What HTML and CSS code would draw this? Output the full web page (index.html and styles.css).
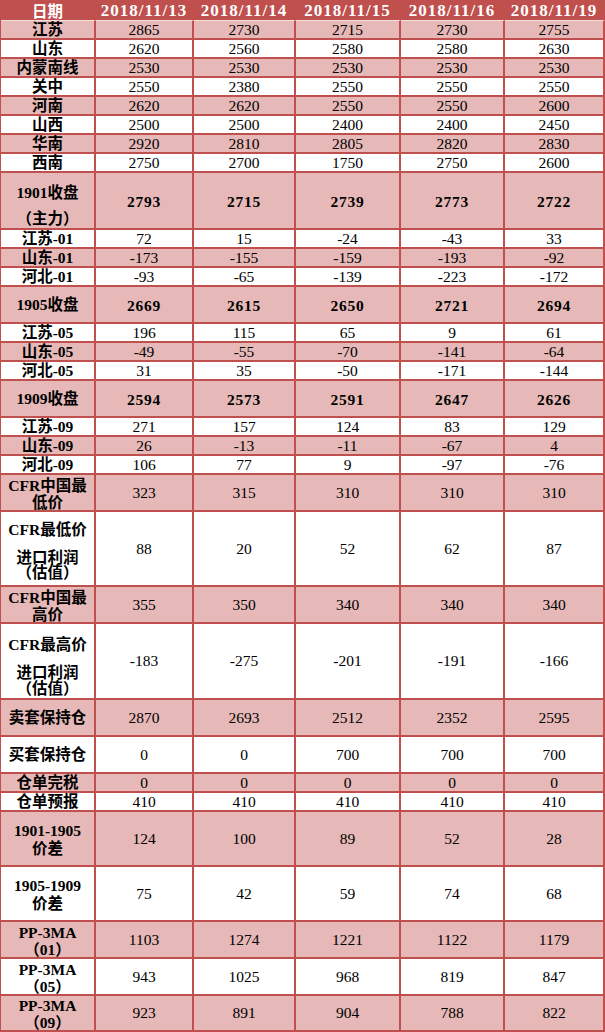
FILE: index.html
```html
<!DOCTYPE html>
<html lang="zh-CN">
<head>
<meta charset="utf-8">
<title>价格表</title>
<link rel="stylesheet" href="styles.css">
</head>
<body>
<div class="sheet">
  <div class="r hdr">
    <div class="c hl">日期</div>
    <div class="c hd">2018/11/13</div>
    <div class="c hd">2018/11/14</div>
    <div class="c hd">2018/11/15</div>
    <div class="c hd">2018/11/16</div>
    <div class="c hd">2018/11/19</div>
  </div>
  <div class="r p"><div class="c l">江苏</div><div class="c v">2865</div><div class="c v">2730</div><div class="c v">2715</div><div class="c v">2730</div><div class="c v">2755</div></div>
  <div class="r"><div class="c l">山东</div><div class="c v">2620</div><div class="c v">2560</div><div class="c v">2580</div><div class="c v">2580</div><div class="c v">2630</div></div>
  <div class="r p"><div class="c l">内蒙南线</div><div class="c v">2530</div><div class="c v">2530</div><div class="c v">2530</div><div class="c v">2530</div><div class="c v">2530</div></div>
  <div class="r"><div class="c l">关中</div><div class="c v">2550</div><div class="c v">2380</div><div class="c v">2550</div><div class="c v">2550</div><div class="c v">2550</div></div>
  <div class="r p"><div class="c l">河南</div><div class="c v">2620</div><div class="c v">2620</div><div class="c v">2550</div><div class="c v">2550</div><div class="c v">2600</div></div>
  <div class="r"><div class="c l">山西</div><div class="c v">2500</div><div class="c v">2500</div><div class="c v">2400</div><div class="c v">2400</div><div class="c v">2450</div></div>
  <div class="r p"><div class="c l">华南</div><div class="c v">2920</div><div class="c v">2810</div><div class="c v">2805</div><div class="c v">2820</div><div class="c v">2830</div></div>
  <div class="r"><div class="c l">西南</div><div class="c v">2750</div><div class="c v">2700</div><div class="c v">1750</div><div class="c v">2750</div><div class="c v">2600</div></div>
  <div class="r p h57"><div class="c l main"><span class="m1">1901收盘</span><span class="m2">（主力）</span></div><div class="c b">2793</div><div class="c b">2715</div><div class="c b">2739</div><div class="c b">2773</div><div class="c b">2722</div></div>
  <div class="r"><div class="c l">江苏-01</div><div class="c v">72</div><div class="c v">15</div><div class="c v">-24</div><div class="c v">-43</div><div class="c v">33</div></div>
  <div class="r p"><div class="c l">山东-01</div><div class="c v">-173</div><div class="c v">-155</div><div class="c v">-159</div><div class="c v">-193</div><div class="c v">-92</div></div>
  <div class="r"><div class="c l">河北-01</div><div class="c v">-93</div><div class="c v">-65</div><div class="c v">-139</div><div class="c v">-223</div><div class="c v">-172</div></div>
  <div class="r p h37"><div class="c l">1905收盘</div><div class="c b">2669</div><div class="c b">2615</div><div class="c b">2650</div><div class="c b">2721</div><div class="c b">2694</div></div>
  <div class="r"><div class="c l">江苏-05</div><div class="c v">196</div><div class="c v">115</div><div class="c v">65</div><div class="c v">9</div><div class="c v">61</div></div>
  <div class="r p"><div class="c l">山东-05</div><div class="c v">-49</div><div class="c v">-55</div><div class="c v">-70</div><div class="c v">-141</div><div class="c v">-64</div></div>
  <div class="r"><div class="c l">河北-05</div><div class="c v">31</div><div class="c v">35</div><div class="c v">-50</div><div class="c v">-171</div><div class="c v">-144</div></div>
  <div class="r p h37"><div class="c l">1909收盘</div><div class="c b">2594</div><div class="c b">2573</div><div class="c b">2591</div><div class="c b">2647</div><div class="c b">2626</div></div>
  <div class="r"><div class="c l">江苏-09</div><div class="c v">271</div><div class="c v">157</div><div class="c v">124</div><div class="c v">83</div><div class="c v">129</div></div>
  <div class="r p"><div class="c l">山东-09</div><div class="c v">26</div><div class="c v">-13</div><div class="c v">-11</div><div class="c v">-67</div><div class="c v">4</div></div>
  <div class="r"><div class="c l">河北-09</div><div class="c v">106</div><div class="c v">77</div><div class="c v">9</div><div class="c v">-97</div><div class="c v">-76</div></div>
  <div class="r p h37"><div class="c l two"><span>CFR中国最</span><span>低价</span></div><div class="c v">323</div><div class="c v">315</div><div class="c v">310</div><div class="c v">310</div><div class="c v">310</div></div>
  <div class="r h75"><div class="c l three a"><span class="t1">CFR最低价</span><span class="t2">进口利润</span><span class="t3">（估值）</span></div><div class="c v">88</div><div class="c v">20</div><div class="c v">52</div><div class="c v">62</div><div class="c v">87</div></div>
  <div class="r p h37"><div class="c l two"><span>CFR中国最</span><span>高价</span></div><div class="c v">355</div><div class="c v">350</div><div class="c v">340</div><div class="c v">340</div><div class="c v">340</div></div>
  <div class="r h76"><div class="c l three bb"><span class="t1">CFR最高价</span><span class="t2">进口利润</span><span class="t3">（估值）</span></div><div class="c v">-183</div><div class="c v">-275</div><div class="c v">-201</div><div class="c v">-191</div><div class="c v">-166</div></div>
  <div class="r p h37"><div class="c l">卖套保持仓</div><div class="c v">2870</div><div class="c v">2693</div><div class="c v">2512</div><div class="c v">2352</div><div class="c v">2595</div></div>
  <div class="r h37"><div class="c l">买套保持仓</div><div class="c v">0</div><div class="c v">0</div><div class="c v">700</div><div class="c v">700</div><div class="c v">700</div></div>
  <div class="r p"><div class="c l">仓单完税</div><div class="c v">0</div><div class="c v">0</div><div class="c v">0</div><div class="c v">0</div><div class="c v">0</div></div>
  <div class="r"><div class="c l">仓单预报</div><div class="c v">410</div><div class="c v">410</div><div class="c v">410</div><div class="c v">410</div><div class="c v">410</div></div>
  <div class="r p h55"><div class="c l two wide"><span>1901-1905</span><span>价差</span></div><div class="c v">124</div><div class="c v">100</div><div class="c v">89</div><div class="c v">52</div><div class="c v">28</div></div>
  <div class="r h55"><div class="c l two wide"><span>1905-1909</span><span>价差</span></div><div class="c v">75</div><div class="c v">42</div><div class="c v">59</div><div class="c v">74</div><div class="c v">68</div></div>
  <div class="r p h37"><div class="c l two"><span>PP-3MA</span><span>（01）</span></div><div class="c v">1103</div><div class="c v">1274</div><div class="c v">1221</div><div class="c v">1122</div><div class="c v">1179</div></div>
  <div class="r h37"><div class="c l two"><span>PP-3MA</span><span>（05）</span></div><div class="c v">943</div><div class="c v">1025</div><div class="c v">968</div><div class="c v">819</div><div class="c v">847</div></div>
  <div class="r p h36"><div class="c l two last"><span>PP-3MA</span><span>（09）</span></div><div class="c v">923</div><div class="c v">891</div><div class="c v">904</div><div class="c v">788</div><div class="c v">822</div></div>
</div>
</body>
</html>
```
FILE: styles.css
```css
* {
  box-sizing: border-box;
  margin: 0;
  padding: 0;
}

body {
  margin: 0;
  background: #ffffff;
  color: #000000;
  font-family: "Liberation Serif", "Noto Sans CJK SC", serif;
}

.sheet {
  width: 605px;
  border-left: 1px solid #c0504d;
}

.r {
  display: grid;
  grid-template-columns: 95px 98px 102px 105px 104px 100px;
  height: 19px;
  background: #ffffff;
}

.r.p {
  background: #e6b8b7;
}

.h36 { height: 36px; }
.h37 { height: 37px; }
.h55 { height: 55px; }
.h57 { height: 57px; }
.h75 { height: 75px; }
.h76 { height: 76px; }

.c {
  display: flex;
  align-items: center;
  justify-content: center;
  text-align: center;
  border-right: 2px solid #c0504d;
  border-bottom: 2px solid #c0504d;
  white-space: nowrap;
  line-height: 1;
  overflow: hidden;
}

.hdr {
  height: 21px;
  background: #c0504d;
}

.hdr .c {
  border-bottom: 1px solid #f4dcdb;
  color: #ffffff;
  font-weight: bold;
  padding-top: 1px;
}

.hl {
  font-family: "Noto Sans CJK SC", sans-serif;
  font-size: 15.5px;
}

.hd {
  font-size: 17px;
  letter-spacing: 1px;
}

.l {
  font-family: "Liberation Serif", "Noto Sans CJK SC", serif;
  font-weight: bold;
  font-size: 15.5px;
}

.v {
  font-size: 15.5px;
}

.b {
  font-size: 15.5px;
  font-weight: bold;
  letter-spacing: 0.8px;
  padding-top: 2px;
}

.l span {
  display: block;
}

.main {
  flex-direction: column;
  justify-content: flex-start;
  padding-top: 12px;
}

.main .m1,
.main .m2 {
  line-height: 16px;
}

.main .m2 {
  margin-top: 10px;
}

.two {
  flex-direction: column;
  line-height: 17px;
  padding-top: 3px;
}

.two.wide {
  line-height: 18px;
  padding-top: 2px;
}

.two.last {
  padding-top: 1px;
}

.three {
  flex-direction: column;
}

.three .t1 {
  line-height: 16px;
}

.three .t2 {
  line-height: 15px;
  margin-top: 12px;
}

.three .t3 {
  line-height: 15px;
}

.three.a {
  padding-top: 4px;
}

.three.bb {
  padding-top: 11px;
}

.three.bb .t2,
.three.bb .t3 {
  line-height: 16px;
}
```
